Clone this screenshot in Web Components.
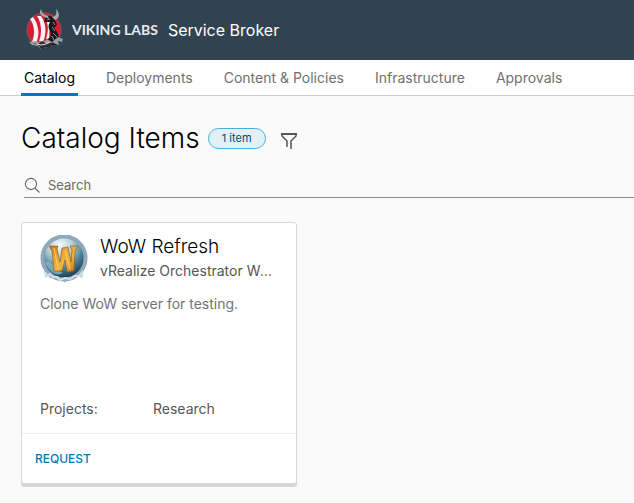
<!DOCTYPE html>
<html lang="en">
<head>
<meta charset="utf-8">
<meta name="viewport" content="width=device-width, initial-scale=1">
<title>Service Broker</title>
<style>
  body { margin: 0; background: #fafafa; color: #000; font-family: Inter, "Open Sans", sans-serif; font-size: 14px; line-height: 20px; overflow-x: hidden; }
</style>
</head>
<body>
<broker-app></broker-app>

<template id="app">
  <style>
    :host { display: block; }
    main { padding: 24px 0 16px 21px; }
    .title { display: flex; align-items: center; gap: 8px; height: 36px; }
    h1 { margin: 0; font-size: 28px; line-height: 36px; font-weight: 300; }
    .cards { display: grid; grid-template-columns: repeat(auto-fill, 276px); gap: 24px; padding-top: 24px; }
  </style>
  <broker-header>Service Broker</broker-header>
  <broker-tabs>
    <broker-tab active>Catalog</broker-tab>
    <broker-tab>Deployments</broker-tab>
    <broker-tab>Content &amp; Policies</broker-tab>
    <broker-tab>Infrastructure</broker-tab>
    <broker-tab>Approvals</broker-tab>
  </broker-tabs>
  <main>
    <div class="title"><h1>Catalog Items</h1><count-badge>1 item</count-badge><filter-button></filter-button></div>
    <search-field></search-field>
    <div class="cards">
      <catalog-card>
        <wow-icon slot="icon"></wow-icon>
        <span slot="name">WoW Refresh</span>
        <span slot="type">vRealize Orchestrator Workflow</span>
        <span slot="description">Clone WoW server for testing.</span>
        <span slot="projects">Research</span>
      </catalog-card>
    </div>
  </main>
</template>

<template id="header">
  <style>
    :host { display: block; background: #314351; color: #fff; }
    header { display: flex; align-items: center; height: 60px; padding-left: 24px; }
    viking-mark { margin-right: 8px; }
    .brand { font: 700 14px/24px Lato, sans-serif; color: #e9ebed; white-space: nowrap; margin-right: 10px; }
    .product { font-size: 16px; line-height: 24px; white-space: nowrap; }
  </style>
  <header><viking-mark></viking-mark><span class="brand">VIKING LABS</span><span class="product"><slot></slot></span></header>
</template>

<template id="mark">
  <style>:host { display: block; } svg { display: block; }</style>
  <svg width="40" height="44" viewBox="0 0 40 44" aria-hidden="true">
    <circle cx="20" cy="22" r="17" fill="#dc1c35" stroke="#7b5a66" stroke-width="1"/>
    <path d="M6 11C11 18 11 27 8 34L12 35C16 27 15 17 9 9ZM13 8C18 15 18 27 15 33L19 34C23 25 22 15 17 8Z" fill="#f7f3f4"/>
    <path d="M22 12C25 18 24 25 22 31L25 31L26 14Z" fill="#f7f3f4"/>
    <path d="M20 14L22 9C25 7 28 8 30 10L33 17L30 20C34 24 35 29 36 33L31 37L25 37L22 31C27 31 28 27 26 23C24 20 24 17 26 14Z" fill="#15191c"/>
    <path d="M21 9C16 8 15 4 17 1C18 6 21 7 24 8L25 11ZM28 9C32 9 33 5 32 1C37 6 35 11 31 12Z" fill="#a4a9ac"/>
    <path d="M23 12L26 11M29 14L31 17M28 19L31 23M29 25L33 29M28 28L30 32" fill="none" stroke="#8d9294" stroke-width="1"/>
    <path d="M5 34L12 33L18 35L23 31L28 34L34 29L39 31L38 34L34 33L35 37L29 35L23 38L19 38L18 42L14 38L8 37Z" fill="#999da0"/>
    <path d="M9 35L14 36L18 33L23 36L30 34L26 39L20 39L18 42L15 38Z" fill="#2b2f32"/>
    <path d="M12 36L17 37L22 36L25 34" fill="none" stroke="#e2e3e4" stroke-width="1"/>
  </svg>
</template>

<template id="tabs">
  <style>
    :host { display: block; background: #fff; border-bottom: 1px solid #ccc; }
    nav { display: flex; gap: 25px; height: 35px; padding-left: 21px; }
  </style>
  <nav aria-label="Main"><slot></slot></nav>
</template>

<template id="tab">
  <style>
    :host { display: block; color: #707070; }
    a { display: block; padding: 8px 3px 7px; line-height: 20px; color: inherit; text-decoration: none; white-space: nowrap; }
    :host([active]) { color: #000; }
    :host([active]) a { box-shadow: inset 0 -2px #0079b8, 0 1px #0079b8; }
  </style>
  <a href="#"><slot></slot></a>
</template>

<template id="badge">
  <style>
    :host { display: block; box-sizing: border-box; min-width: 58px; padding: 0 11px; border: 1px solid #49afd9; border-radius: 11px; background: #e1f1f6; color: #004a70; font-size: 11px; line-height: 19px; text-align: center; white-space: nowrap; }
  </style>
  <slot></slot>
</template>

<template id="filter">
  <style>
    :host { display: block; padding: 6px 0 0 5px; }
    button { display: block; padding: 0; border: 0; background: none; color: #565656; }
    svg { display: block; }
  </style>
  <button type="button" aria-label="Filter">
    <svg width="20" height="18" viewBox="0 0 20 18" fill="none" stroke="currentColor"><path d="M17 2V4L12 9V17M3 2V4L8 9V15" stroke-width="1.5"/><path d="M2 2H18" stroke-width="2"/></svg>
  </button>
</template>

<template id="search">
  <style>
    :host { display: block; padding-left: 3px; margin-top: 17px; }
    label { display: flex; align-items: center; gap: 7px; height: 24px; border-bottom: 1px solid #8c8c8c; color: #666; }
    svg { flex: none; }
    input { flex: 1; min-width: 0; border: 0; padding: 0; outline: 0; background: none; font: inherit; font-size: 13px; line-height: 20px; }
    input::placeholder { color: #6a6a6a; opacity: 1; }
  </style>
  <label>
    <svg width="17" height="17" viewBox="0 0 17 17" fill="none" stroke="currentColor" stroke-width="1.1" aria-hidden="true"><circle cx="7" cy="7" r="5.6"/><path d="M11 11L15.5 15.5"/></svg>
    <input type="text" placeholder="Search" aria-label="Search">
  </label>
</template>

<template id="card">
  <style>
    :host { display: block; box-sizing: border-box; background: #fff; border: 1px solid #d7d7d7; border-radius: 3px; box-shadow: 0 3px #d7d7d7; }
    .body { display: flex; flex-direction: column; min-height: 210px; box-sizing: border-box; padding: 12px 18px 14px; color: #565656; }
    .head { display: flex; gap: 12px; }
    .names { min-width: 0; flex: 1; padding-right: 4px; }
    h2 { margin: 0; color: #000; font-size: 19px; line-height: 24px; font-weight: 300; }
    .type { overflow: hidden; text-overflow: ellipsis; white-space: nowrap; line-height: 24px; }
    p { margin: 11px 0 0; color: #737373; }
    dl { display: flex; margin: auto 0 0; }
    dt { flex: 0 0 113px; }
    dd { margin: 0; }
    footer { border-top: 1px solid #eee; padding: 15px 13px 14px; }
    button { display: block; border: 0; padding: 0; background: none; color: #0079b8; font: 500 12px/20px Inter, "Open Sans", sans-serif; text-transform: uppercase; }
  </style>
  <article>
    <div class="body">
      <div class="head">
        <slot name="icon"></slot>
        <div class="names"><h2><slot name="name"></slot></h2><div class="type"><slot name="type"></slot></div></div>
      </div>
      <p><slot name="description"></slot></p>
      <dl><dt>Projects:</dt><dd><slot name="projects"></slot></dd></dl>
    </div>
    <footer><button type="button">Request</button></footer>
  </article>
</template>

<template id="wow">
  <style>:host { display: block; flex: none; } svg { display: block; }</style>
  <svg width="48" height="48" viewBox="0 0 48 48" aria-hidden="true">
    <defs>
      <radialGradient id="orb" cx=".4" cy=".2" r=".85"><stop offset="0" stop-color="#f2fafb"/><stop offset=".35" stop-color="#b3ced5"/><stop offset=".65" stop-color="#477f92"/><stop offset="1" stop-color="#0b2638"/></radialGradient>
      <linearGradient id="gold" x1="0" x2="1" y1="0" y2="1"><stop offset="0" stop-color="#b96b20"/><stop offset=".3" stop-color="#e5a034"/><stop offset=".6" stop-color="#f2b540"/><stop offset="1" stop-color="#b66a1d"/></linearGradient>
    </defs>
    <path d="M4 34L5 43L8 40L10 44L13 41L17 45L22 44L25 48L28 44L34 44L38 41L42 43L44 34Z" fill="#b9d0dd"/>
    <circle cx="24" cy="23" r="21.5" fill="url(#orb)" stroke="#8ea6ba" stroke-width="4"/>
    <circle cx="24" cy="23" r="22" fill="none" stroke="#a5bac9" stroke-width="1" stroke-dasharray="2 3 1 2"/>
    <path d="M5 27C11 25 15 34 23 38C16 42 9 37 5 27Z" fill="#8ac0cc" opacity=".7"/>
    <path d="M9 11L18 11L17 14L20 27L22 13L28 12L31 27L32 15L30 11L38 11L35 16L34 36L27 37L25 25L22 36L14 36L12 16Z" fill="url(#gold)" stroke="#8a5522" stroke-width=".6"/>
    <path d="M14 13L18 33M25 15L30 34" fill="none" stroke="#ffd060" stroke-width="1"/>
    <path d="M5 37L7 41L10 39L13 42L17 42L20 45L25 43L30 44L35 41L39 41L43 36" fill="none" stroke="#d3e2ea" stroke-width="2"/>
  </svg>
</template>

<script>
  const define = (name, templateId) => customElements.define(name, class extends HTMLElement {
    constructor() {
      super();
      this.attachShadow({ mode: "open" }).append(document.getElementById(templateId).content.cloneNode(true));
    }
  });
  define("viking-mark", "mark");
  define("wow-icon", "wow");
  define("count-badge", "badge");
  define("filter-button", "filter");
  define("search-field", "search");
  define("broker-tab", "tab");
  define("broker-tabs", "tabs");
  define("broker-header", "header");
  define("catalog-card", "card");
  define("broker-app", "app");
</script>
</body>
</html>
